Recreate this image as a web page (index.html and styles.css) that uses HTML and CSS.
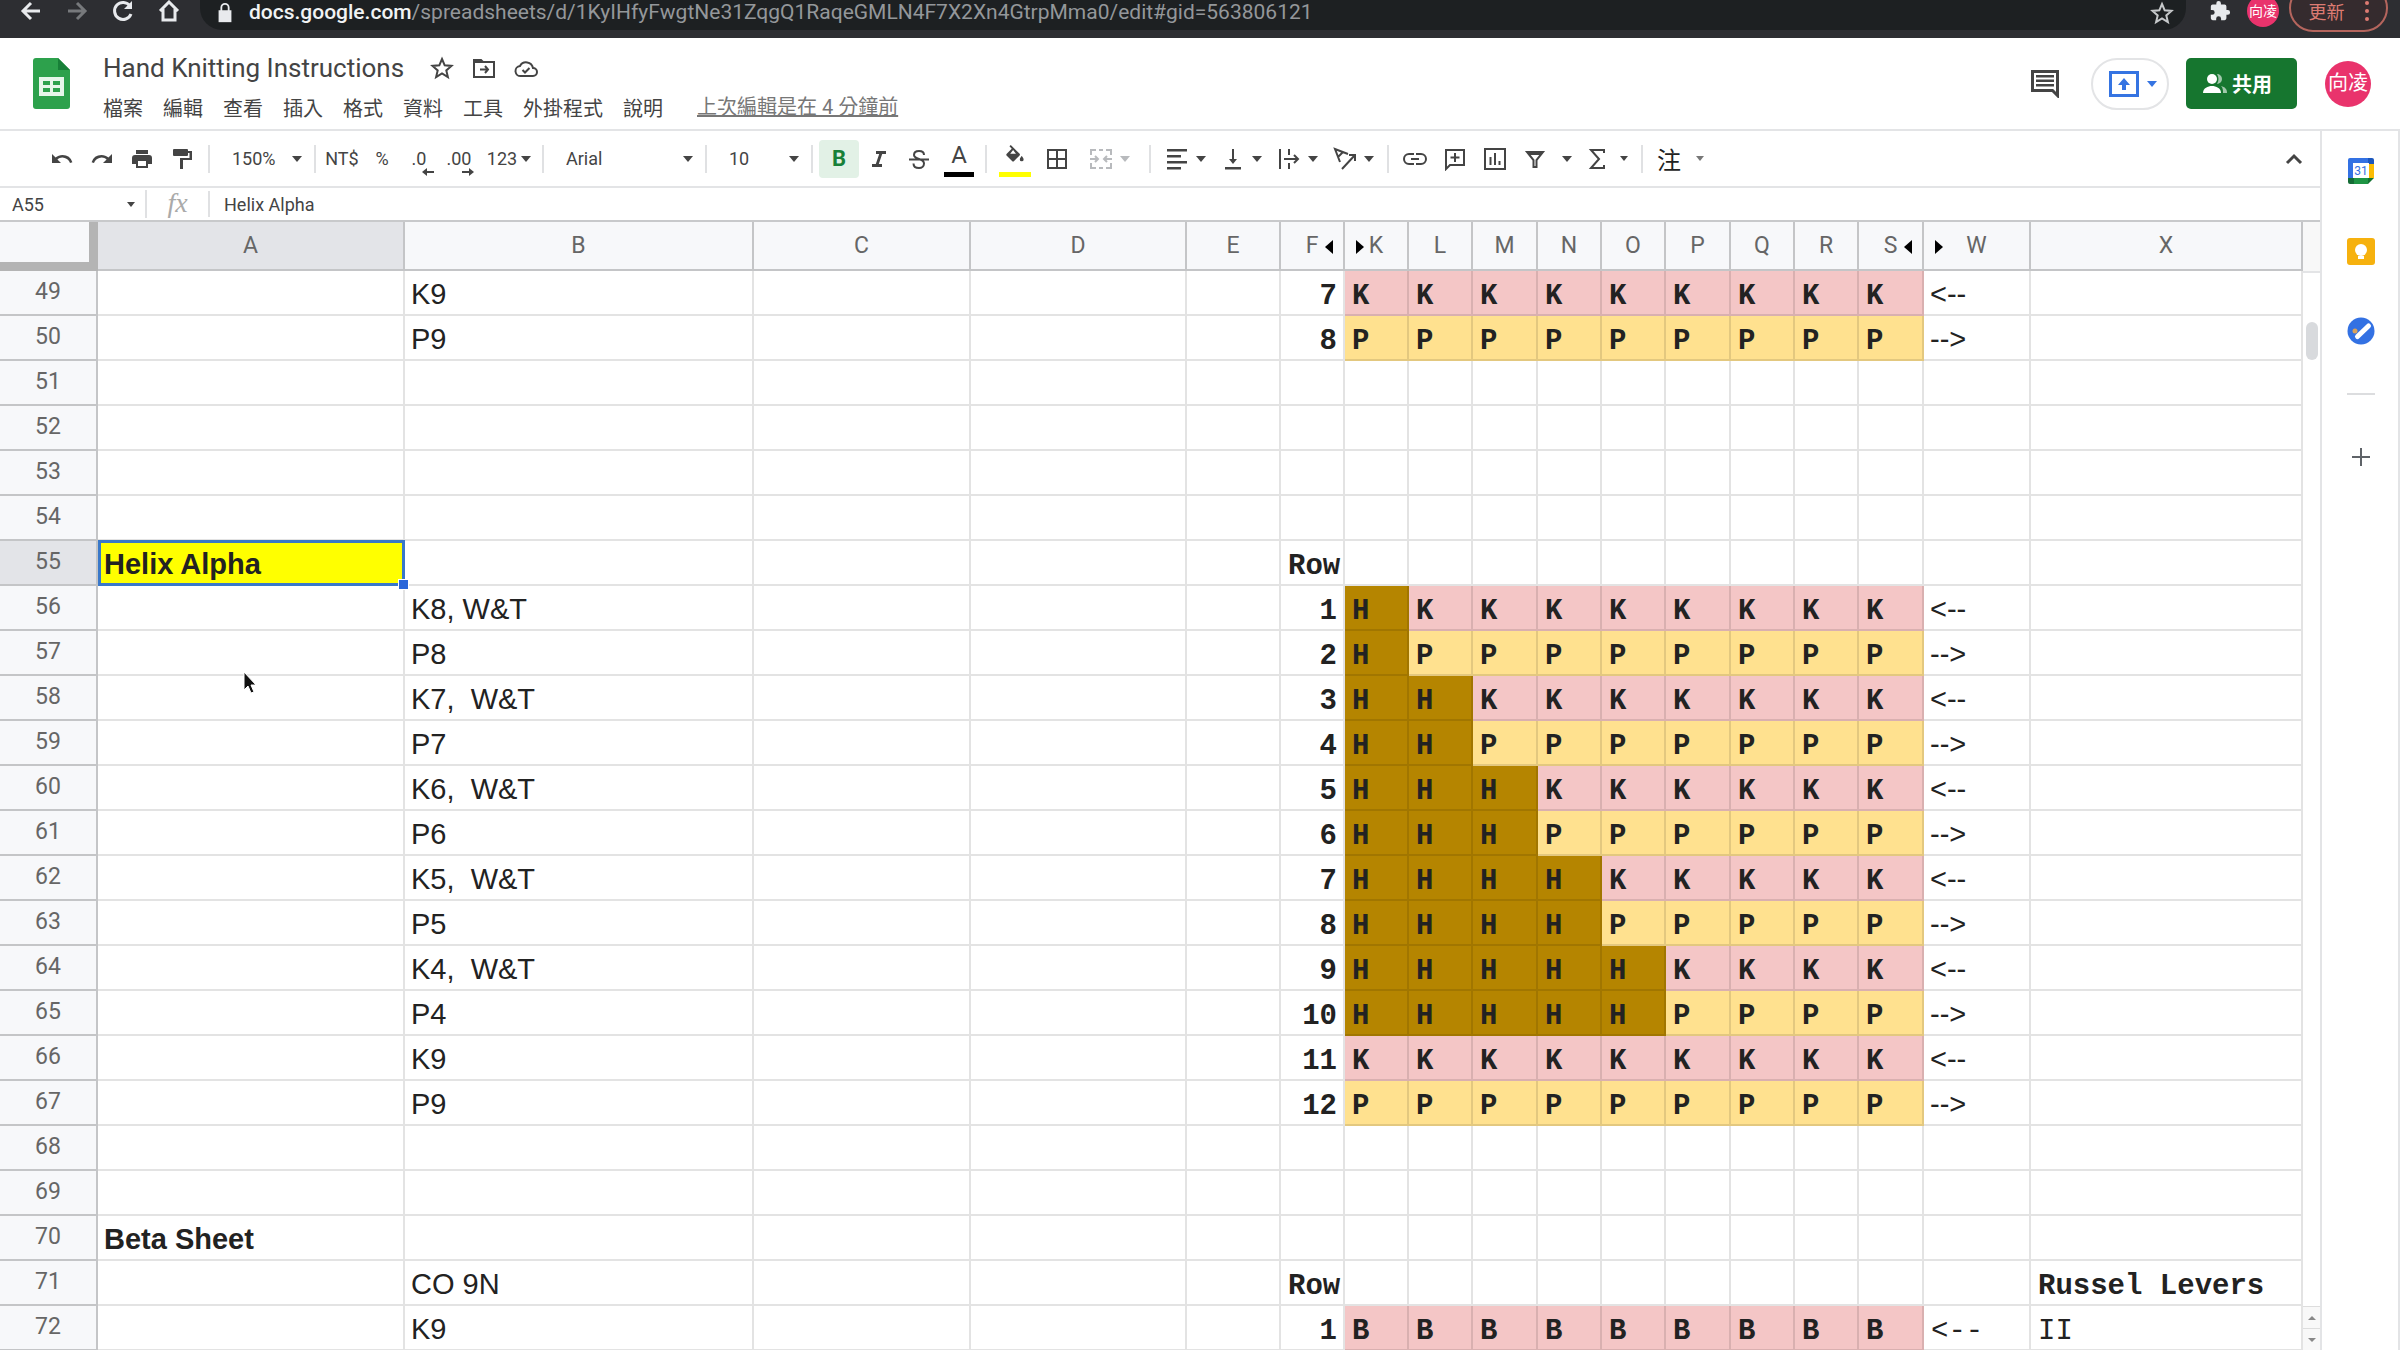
FILE: index.html
```html
<!DOCTYPE html>
<html lang="zh-Hant">
<head>
    <meta charset="UTF-8">
    <meta name="viewport" content="width=device-width, initial-scale=1.0">
    <title>Hand Knitting Instructions</title>
    <link rel="stylesheet" href="styles.css">
</head>
<body>
    <nav class="browser-bar">
        <button class="nav-btn" aria-label="Back"><svg viewBox="0 0 24 24" class="stroke"><path d="M21 12H4M12 4l-8 8 8 8"/></svg></button>
        <button class="nav-btn dim" aria-label="Forward"><svg viewBox="0 0 24 24" class="stroke"><path d="M3 12h17M12 4l8 8-8 8"/></svg></button>
        <button class="nav-btn" aria-label="Reload"><svg viewBox="0 0 24 24" class="stroke"><path d="M20 15a8.500 8.500 0 1 1-1-8"/><path d="M21 2v8h-8z" fill="currentColor" stroke="none"/></svg></button>
        <button class="nav-btn" aria-label="Home"><svg viewBox="0 0 24 24" class="stroke"><path d="M3 12l9-9 9 9M6 10v11h12V10"/></svg></button>
        <div class="address">
            <svg class="lock" viewBox="0 0 16 24"><path d="M1 9h14v13H1z"/><path d="M4 10V6a4 4 0 0 1 8 0v4" fill="none" stroke="currentColor" stroke-width="2"/></svg>
            <span class="url"><b>docs.google.com</b>/spreadsheets/d/1KyIHfyFwgtNe31ZqgQ1RaqeGMLN4F7X2Xn4GtrpMma0/edit#gid=563806121</span>
            <svg class="bookmark stroke" viewBox="0 0 24 24"><path d="M12 3l2.700 6.300 6.800.600-5.200 4.500 1.600 6.700L12 17.500l-5.900 3.600 1.600-6.700L2.500 9.900l6.800-.600z"/></svg>
        </div>
        <svg class="puzzle" viewBox="0 0 24 24"><path d="M20.500 11H19V7a2 2 0 0 0-2-2h-4V3.500a2.500 2.500 0 0 0-5 0V5H4a2 2 0 0 0-2 2v3.800h1.500a2.700 2.700 0 0 1 0 5.400H2V20a2 2 0 0 0 2 2h3.800v-1.500a2.700 2.700 0 0 1 5.400 0V22H17a2 2 0 0 0 2-2v-4h1.500a2.500 2.500 0 0 0 0-5z"/></svg>
        <span class="avatar small">向凌</span>
        <button class="update">更新 <i></i></button>
    </nav>

    <header class="doc-header">
        <svg class="logo" viewBox="0 0 37 51">
            <path d="M3 0h22l12 12v36a3 3 0 0 1-3 3H3a3 3 0 0 1-3-3V3a3 3 0 0 1 3-3z" fill="#2da14c"/>
            <path d="M25 0l12 12H25z" fill="#188038"/>
            <path d="M6 19h25v19H6z" fill="#e6f6ea"/>
            <path d="M10 23h7v4h-7zm10 0h7v4h-7zM10 30h7v4h-7zm10 0h7v4h-7z" fill="#2da14c"/>
        </svg>
        <div class="doc-info">
            <div class="title-row">
                <h1>Hand Knitting Instructions</h1>
                <button aria-label="Star"><svg viewBox="0 0 24 24" class="stroke"><path d="M12 3l2.700 6.300 6.800.600-5.200 4.500 1.600 6.700L12 17.500l-5.900 3.600 1.600-6.700L2.500 9.900l6.800-.600z"/></svg></button>
                <button aria-label="Move"><svg viewBox="0 0 24 24" class="stroke"><path d="M2 4h7l2 2h11v15H2zM2 6h9M8 13.500h8M13 10l3 3.500-3 3.500"/></svg></button>
                <button aria-label="Saved"><svg viewBox="0 0 24 24" class="stroke"><path d="M7 20a5 5 0 0 1-1-10 7 7 0 0 1 13 2 4 4 0 0 1 0 8zM8.500 14l2.500 2.500 4.500-4.500"/></svg></button>
            </div>
            <div class="menu-row">
                <button>檔案</button>
                <button>編輯</button>
                <button>查看</button>
                <button>插入</button>
                <button>格式</button>
                <button>資料</button>
                <button>工具</button>
                <button>外掛程式</button>
                <button>說明</button>
                <a class="last-edit" href="#">上次編輯是在 4 分鐘前</a>
            </div>
        </div>
        <button class="comments" aria-label="Comments"><svg viewBox="0 0 28 28"><path d="M1.500 1.500h25v24l-5-5h-20z" fill="none" stroke="currentColor" stroke-width="3"/><path d="M5 5h18v2.500H5zm0 4.500h18V12H5zM5 14h18v2.500H5z"/></svg></button>
        <button class="present" aria-label="Present">
            <svg viewBox="0 0 30 26"><path d="M1.500 1.500h27v23h-27z" fill="none" stroke="currentColor" stroke-width="3"/><path d="M15 7l6 7h-4v5h-4v-5H9z"/></svg>
            <i class="caret"></i>
        </button>
        <button class="share">
            <svg viewBox="0 0 24 24"><circle cx="9" cy="7" r="5"/><path d="M0 21c0-5 5-7 9-7s9 2 9 7z"/><path d="M14 2a5 5 0 0 1 0 10c2-3 2-7 0-10zM18 14c4 1 6 3 6 7h-4c0-3 0-5-2-7z" opacity=".6"/></svg>
            共用
        </button>
        <span class="avatar">向凌</span>
    </header>

    <div class="workspace">
        <main class="editor">
            <div class="toolbar">
                <div class="group">
                    <button class="tool" aria-label="Undo"><svg viewBox="0 0 24 24"><path d="M12.500 8c-2.700 0-5 1-6.900 2.600L2 7v9h9l-3.600-3.600A8 8 0 0 1 20 16l2.400-.800A10.500 10.500 0 0 0 12.500 8z"/></svg></button>
                    <button class="tool" aria-label="Redo"><svg viewBox="0 0 24 24"><path d="M11.500 8c2.700 0 5 1 6.900 2.600L22 7v9h-9l3.600-3.600A8 8 0 0 0 4 16l-2.400-.800A10.500 10.500 0 0 1 11.500 8z"/></svg></button>
                    <button class="tool" aria-label="Print"><svg viewBox="0 0 24 24"><path d="M19 8H5a3 3 0 0 0-3 3v6h4v4h12v-4h4v-6a3 3 0 0 0-3-3zm-3 11H8v-5h8zm2-16H6v4h12z"/></svg></button>
                    <button class="tool" aria-label="Paint format"><svg viewBox="0 0 24 24"><path d="M18 4V3a1 1 0 0 0-1-1H4a1 1 0 0 0-1 1v5a1 1 0 0 0 1 1h13a1 1 0 0 0 1-1V6h1.500v5H10v11h3v-9h9V4z"/></svg></button>
                </div>
                <div class="group">
                    <label class="pick zoom"><select aria-label="Zoom"><option>150%</option></select></label>
                </div>
                <div class="group">
                    <button class="tool">NT$</button>
                    <button class="tool">%</button>
                    <button class="tool decimal">.0<svg viewBox="0 0 12 8"><path d="M5 0v3h7v2H5v3L0 4z"/></svg></button>
                    <button class="tool decimal">.00<svg viewBox="0 0 12 8"><path d="M7 0v3H0v2h7v3l5-4z"/></svg></button>
                    <button class="tool format">123<i class="caret"></i></button>
                </div>
                <div class="group">
                    <label class="pick font"><select aria-label="Font"><option>Arial</option></select></label>
                </div>
                <div class="group">
                    <label class="pick size"><select aria-label="Font size"><option>10</option></select></label>
                </div>
                <div class="group">
                    <button class="tool bold active">B</button>
                    <button class="tool" aria-label="Italic"><svg viewBox="0 0 24 24"><path d="M9 4v3h3.200L8.800 17H5v3h10v-3h-3.200l3.400-10H19V4z"/></svg></button>
                    <button class="tool strike" aria-label="Strikethrough"><svg viewBox="0 0 24 24" class="stroke"><path d="M17 8c0-3-2-4-5-4S7 5.500 7 8c0 2 2 3 5 4s5 2 5 4.500S15 21 12 21s-5.500-1.500-5.500-4.500M2 12.500h20"/></svg></button>
                    <button class="tool text-color"><span>A</span></button>
                </div>
                <div class="group">
                    <button class="tool fill-color" aria-label="Fill color"><svg viewBox="0 0 24 24"><path d="M16.600 8.900L7.600 0 6.200 1.400l2.400 2.400-5.200 5.200a1.500 1.500 0 0 0 0 2.100l5.500 5.500a1.500 1.500 0 0 0 2.200 0l5.500-5.500a1.500 1.500 0 0 0 0-2.200zM7 9L10 5.200 13 9zM19 11.500s-2 2.200-2 3.500a2 2 0 0 0 4 0c0-1.300-2-3.500-2-3.500z"/></svg></button>
                    <button class="tool" aria-label="Borders"><svg viewBox="0 0 24 24" class="stroke"><path d="M3 3h18v18H3zM12 3v18M3 12h18"/></svg></button>
                    <button class="tool split merge disabled" aria-label="Merge cells"><svg viewBox="0 0 24 24" class="stroke"><path d="M2 8V3h5M10 3h4M17 3h5v5M2 16v5h5M10 21h4M17 21h5v-5M1 12h8M23 12h-8M6 9l3 3-3 3M18 9l-3 3 3 3"/></svg><i class="caret"></i></button>
                </div>
                <div class="group">
                    <button class="tool split" aria-label="Horizontal align"><svg viewBox="0 0 24 24"><path d="M2 2h20v2.500H2zm0 6h14v2.500H2zm0 6h20v2.500H2zm0 6h14v2.500H2z"/></svg><i class="caret"></i></button>
                    <button class="tool split" aria-label="Vertical align"><svg viewBox="0 0 24 24"><path d="M16 12h-3V2h-2v10H8l4 5zM4 20h16v2.500H4z"/></svg><i class="caret"></i></button>
                    <button class="tool split" aria-label="Text wrapping"><svg viewBox="0 0 24 24" class="stroke"><path d="M3 2v20M12 2v6M12 16v6M7 12h14M17 8l4 4-4 4"/></svg><i class="caret"></i></button>
                    <button class="tool split" aria-label="Text rotation"><svg viewBox="0 0 24 24" class="stroke"><path d="M7 15L2 2l13 5M5 10l5-5M9 22L22 8M16 8h6v6"/></svg><i class="caret"></i></button>
                </div>
                <div class="group">
                    <button class="tool" aria-label="Insert link"><svg viewBox="0 0 24 24" class="stroke"><path d="M11 7H6a5 5 0 0 0 0 10h5M13 7h5a5 5 0 0 1 0 10h-5M8 12h8"/></svg></button>
                    <button class="tool" aria-label="Insert comment"><svg viewBox="0 0 24 24" class="stroke"><path d="M3 22V3h18v15H7zM12 6v9M7.500 10.500h9"/></svg></button>
                    <button class="tool" aria-label="Insert chart"><svg viewBox="0 0 24 24" class="stroke"><path d="M2 2h20v20H2zM7.500 10v8M12 6v12M16.500 14v4"/></svg></button>
                    <button class="tool split wide" aria-label="Filter"><svg viewBox="0 0 24 24" class="stroke"><path d="M4 5h16l-6.500 8v7h-3v-7zM6 7h12"/></svg><i class="caret"></i></button>
                    <button class="tool split functions" aria-label="Functions"><svg viewBox="0 0 24 24" class="stroke"><path d="M19 6V3H6l8 9-8 9h13v-3"/></svg><i class="caret tiny"></i></button>
                </div>
                <div class="group">
                    <button class="tool split wide ime">注<i class="caret tiny"></i></button>
                </div>
                <button class="tool collapse" aria-label="Hide menus"><svg viewBox="0 0 24 24" class="stroke"><path d="M5 16l7-7 7 7"/></svg></button>
            </div>

            <div class="formula-bar">
                <label class="name-box"><input type="text" value="A55" aria-label="Cell name"><i class="caret tiny"></i></label>
                <span class="fx">fx</span>
                <input class="formula" type="text" value="Helix Alpha" aria-label="Formula">
            </div>

            <div class="sheet">
                <table class="grid">
                    <colgroup>
                        <col class="w-head"><col class="w-a"><col class="w-b"><col class="w-c"><col class="w-d"><col class="w-e"><col class="w-f">
                        <col class="w-st"><col class="w-st"><col class="w-st wide"><col class="w-st"><col class="w-st"><col class="w-st wide"><col class="w-st"><col class="w-st"><col class="w-st wide">
                        <col class="w-w"><col>
                    </colgroup>
                    <thead>
                        <tr>
                            <td class="corner"></td>
                            <th class="current">A</th>
                            <th>B</th>
                            <th>C</th>
                            <th>D</th>
                            <th>E</th>
                            <th class="hides-next">F</th>
                            <th class="hides-prev">K</th>
                            <th>L</th>
                            <th>M</th>
                            <th>N</th>
                            <th>O</th>
                            <th>P</th>
                            <th>Q</th>
                            <th>R</th>
                            <th class="hides-next">S</th>
                            <th class="hides-prev">W</th>
                            <th>X</th>
                        </tr>
                    </thead>
                    <tbody id="rows"></tbody>
                </table>
                <div class="scrollbar">
                    <div class="track"><div class="thumb"></div></div>
                    <button class="up" aria-label="Scroll up"></button>
                    <button class="down" aria-label="Scroll down"></button>
                </div>
                <svg class="pointer" viewBox="0 0 14 24"><path d="M1 1v18l4-4 3 7 3-1-3-7h5z" fill="#111" stroke="#fff" stroke-width="1"/></svg>
            </div>
        </main>

        <aside class="side-panel">
            <button aria-label="Calendar"><svg viewBox="0 0 28 28"><path d="M1 3a2 2 0 0 1 2-2h18v6H7v14H1z" fill="#3371e3"/><path d="M21 1h4a2 2 0 0 1 2 2v4h-6z" fill="#1c57bd"/><path d="M21 7h6v14h-6z" fill="#fbbc04"/><path d="M7 21h14v6H7z" fill="#1e9444"/><path d="M1 21h6v6H3a2 2 0 0 1-2-2z" fill="#146c35"/><path d="M21 21h6l-6 6z" fill="#137333"/><path d="M6 6h16v15H6z" fill="#fff"/><text x="14" y="18" text-anchor="middle">31</text></svg></button>
            <button aria-label="Keep"><svg viewBox="0 0 28 28"><rect x="0" y="1" width="28" height="27" rx="3" fill="#f6b10e"/><circle cx="14" cy="13" r="6" fill="#fff"/><path d="M11 19h6v3h-6z" fill="#fff"/></svg></button>
            <button aria-label="Tasks"><svg viewBox="0 0 28 28"><circle cx="14" cy="14" r="13.500" fill="#3371e3"/><circle cx="8" cy="14" r="2.500" fill="#d9a25b"/><path d="M10.500 19.500L21.500 9" stroke="#fff" stroke-width="5" stroke-linecap="round"/></svg></button>
            <hr>
            <button aria-label="Add-ons"><svg viewBox="0 0 28 28"><path d="M14 5v18M5 14h18" stroke="#5f6368" stroke-width="2"/></svg></button>
        </aside>
    </div>

    <script src="script.js"></script>
</body>
</html>
```
FILE: styles.css
```css
* {
    box-sizing: border-box;
    margin: 0;
    padding: 0;
}

body {
    height: 100vh;
    display: flex;
    flex-direction: column;
    overflow: hidden;
    background: #fff;
    color: #444;
    font-family: Roboto, "Noto Sans CJK TC", sans-serif;
    font-size: 18px;
}

button, input, select {
    border: none;
    background: none;
    color: inherit;
    font: inherit;
    outline: none;
}

button {
    display: flex;
    align-items: center;
    justify-content: center;
    white-space: nowrap;
}

svg {
    display: block;
    flex: none;
    width: 24px;
    height: 24px;
    fill: currentColor;
}

.stroke {
    fill: none;
    stroke: currentColor;
    stroke-width: 2;
}

.caret {
    flex: none;
    border: 5px solid transparent;
    border-top: 6px solid currentColor;
    border-bottom: none;
}

.caret.tiny {
    border-width: 5px 4px 0;
}

/* browser bar */
.browser-bar {
    flex: none;
    display: flex;
    align-items: flex-start;
    height: 38px;
    padding: 0 12px 0 8px;
    background: #2d2e32;
    color: #e8eaed;
    overflow: hidden;
}

.nav-btn {
    width: 46px;
    height: 22px;
}

.nav-btn.dim {
    color: #77797c;
}

.nav-btn .stroke {
    stroke-width: 3;
}

.address {
    flex: 1;
    display: flex;
    align-items: center;
    height: 30px;
    margin-left: 8px;
    padding: 0 12px 5px 17px;
    background: #1d2022;
    border-radius: 0 0 22px 22px;
}

.lock {
    width: 16px;
    height: 22px;
    margin-right: 16px;
}

.url {
    flex: 1;
    color: #94979a;
    font-size: 21px;
    line-height: 25px;
}

.url b {
    color: #f1f3f4;
    font-weight: 500;
}

.bookmark {
    color: #c6c8ca;
}

.puzzle {
    height: 22px;
    margin: 0 15px 0 22px;
}

.avatar {
    flex: none;
    width: 46px;
    height: 46px;
    border-radius: 50%;
    background: #e9336c;
    color: #fff;
    font-size: 20px;
    line-height: 44px;
    text-align: center;
}

.avatar.small {
    width: 32px;
    height: 32px;
    margin-top: -5px;
    font-size: 14px;
    line-height: 32px;
}

.update {
    gap: 20px;
    width: 99px;
    height: 48px;
    margin: -16px 0 0 10px;
    padding: 6px 0 0;
    border: 2px solid #b5655d;
    border-radius: 24px;
    background: #352b2e;
    color: #dd7b72;
}

.update i {
    width: 4px;
    height: 4px;
    border-radius: 50%;
    background: currentColor;
    box-shadow: 0 -8px currentColor, 0 8px currentColor;
}

/* document header */
.doc-header {
    flex: none;
    display: flex;
    align-items: center;
    height: 93px;
    padding: 0 29px 0 33px;
    border-bottom: 2px solid #e3e4e6;
}

.logo {
    width: 37px;
    height: 51px;
    margin-right: 33px;
}

.doc-info {
    flex: 1;
    padding-top: 8px;
}

.title-row {
    display: flex;
    align-items: center;
    gap: 18px;
    margin-bottom: 10px;
}

.title-row h1 {
    margin-right: 8px;
    font-size: 26px;
    font-weight: 400;
    line-height: 32px;
}

.menu-row {
    display: flex;
    align-items: center;
    gap: 20px;
    font-size: 20px;
    line-height: 30px;
}

.last-edit {
    margin: 0 0 4px 14px;
    color: #777;
    line-height: 24px;
}

.comments svg {
    width: 28px;
    height: 28px;
}

.present {
    gap: 8px;
    width: 78px;
    height: 52px;
    margin: 0 17px 0 32px;
    padding-left: 6px;
    border: 2px solid #e3e4e6;
    border-radius: 26px;
    color: #3574e2;
}

.present svg {
    width: 30px;
    height: 26px;
}

.share {
    gap: 5px;
    width: 111px;
    height: 51px;
    margin-right: 28px;
    padding-right: 8px;
    border-radius: 5px;
    background: #16762f;
    color: #fff;
    font-size: 20px;
    font-weight: 700;
}

/* editor */
.workspace {
    flex: 1;
    display: flex;
    min-height: 0;
}

.editor {
    flex: 1;
    display: flex;
    flex-direction: column;
    min-width: 0;
}

.toolbar {
    flex: none;
    display: flex;
    align-items: center;
    height: 57px;
    padding: 0 6px 0 42px;
    border-bottom: 2px solid #e3e4e6;
}

.group {
    display: flex;
    align-items: center;
}

.group + .group::before {
    content: '';
    width: 2px;
    height: 28px;
    margin: 0 6px;
    background: #e0e1e3;
}

.tool {
    position: relative;
    width: 40px;
    height: 38px;
    border-radius: 4px;
}

.pick {
    display: flex;
    align-items: center;
    width: 92px;
    padding: 0 6px 0 16px;
}

.pick.font {
    width: 149px;
}

.pick select {
    flex: 1;
    min-width: 0;
    appearance: none;
}

.pick::after {
    content: '';
    border: 5px solid transparent;
    border-top: 6px solid currentColor;
    border-bottom: none;
}

.tool.decimal {
    padding-right: 6px;
}

.tool.decimal svg {
    position: absolute;
    right: 8px;
    bottom: 2px;
    width: 12px;
    height: 8px;
}

.tool.format {
    gap: 4px;
    width: 54px;
}

.tool.active {
    background: #e2f1e6;
    color: #188038;
}

.tool.bold {
    font-size: 22px;
    font-weight: 700;
}

.text-color span {
    height: 36px;
    padding: 0 7px;
    border-bottom: 5px solid #000;
    font-size: 24px;
    line-height: 28px;
}

.tool.fill-color {
    width: 44px;
}

.fill-color svg {
    height: 36px;
    width: 32px;
    padding: 4px 4px 4px;
    border-bottom: 5px solid #ff0;
}

.tool.split {
    justify-content: flex-start;
    gap: 7px;
    width: 56px;
    padding-left: 8px;
}

.tool.split.wide {
    gap: 15px;
    width: 62px;
}

.tool.split.merge {
    width: 66px;
    padding-left: 12px;
}

.tool.split.functions {
    gap: 11px;
    width: 58px;
}

.tool.disabled {
    color: #b8babd;
}

.tool.ime {
    color: #222;
    font-size: 24px;
}

.ime .caret {
    color: #777;
}

.tool.collapse {
    margin-left: auto;
}

.collapse .stroke {
    stroke-width: 3;
}

.formula-bar {
    flex: none;
    display: flex;
    align-items: center;
    height: 34px;
    border-bottom: 2px solid #c8c9cb;
}

.name-box {
    display: flex;
    align-items: center;
    width: 147px;
    height: 28px;
    padding: 0 10px 0 12px;
    border-right: 2px solid #e0e1e3;
}

.name-box input {
    flex: 1;
    min-width: 0;
}

.fx {
    width: 63px;
    height: 26px;
    border-right: 2px solid #e0e1e3;
    color: #aaa;
    font: italic 28px/24px "Liberation Serif", serif;
    text-align: center;
}

.formula {
    flex: 1;
    padding-left: 14px;
}

/* grid */
.sheet {
    position: relative;
    flex: 1;
    display: flex;
    align-items: flex-start;
    min-height: 0;
}

.grid {
    flex: 1;
    width: 100%;
    border-spacing: 0;
    table-layout: fixed;
    color: #222;
    font-family: "Liberation Sans", Arial, sans-serif;
    font-size: 29px;
}

.w-head { width: 98px; }
.w-a { width: 307px; }
.w-b { width: 349px; }
.w-c { width: 217px; }
.w-d { width: 216px; }
.w-e { width: 94px; }
.w-f { width: 64px; }
.w-st { width: 64px; }
.w-st.wide { width: 65px; }
.w-w { width: 107px; }

.grid th {
    position: relative;
    border: solid #c4c5c7;
    border-width: 0 2px 2px 0;
    background: #f7f8fa;
    color: #666;
    font: 400 23px/26px Roboto, sans-serif;
    text-align: center;
    vertical-align: middle;
}

.grid thead th {
    height: 49px;
}

.grid tbody th {
    height: 45px;
    padding-bottom: 2px;
}

.grid th.current {
    background: #e3e4e8;
}

.corner {
    background: #f7f8fa;
    border: solid #b4b4b4;
    border-width: 0 9px 9px 0;
}

.hides-next::after,
.hides-prev::before {
    content: '';
    position: absolute;
    top: 18px;
    border: 7px solid transparent;
}

.hides-next::after {
    right: 10px;
    border-right: 8px solid #000;
    border-left: none;
}

.hides-prev::before {
    left: 11px;
    border-left: 8px solid #000;
    border-right: none;
}

.grid tbody td {
    position: relative;
    height: 45px;
    padding: 3px 6px 0;
    border: solid rgba(0, 0, 0, .11);
    border-width: 0 2px 2px 0;
    line-height: 36px;
    white-space: pre;
}

.grid .mono {
    padding: 8px 6px 0 7px;
    font-family: "Liberation Mono", "Courier New", monospace;
    line-height: 32px;
}

.grid .bold {
    font-weight: 700;
}

.grid .num {
    text-align: right;
}

.grid .pink { background: #f4c6c6; }
.grid .yellow { background: #ffe18f; }
.grid .brown { background: #b58500; }

.grid td.selected {
    background: #ff0;
}

.selected::before {
    content: '';
    position: absolute;
    inset: -1px -2px -2px 0;
    border: 3px solid #3a78c9;
}

.selected::after {
    content: '';
    position: absolute;
    z-index: 1;
    right: -5px;
    bottom: -5px;
    width: 9px;
    height: 9px;
    background: #2a66d9;
    outline: 1px solid #fff;
}

.scrollbar {
    flex: none;
    align-self: stretch;
    display: flex;
    flex-direction: column;
    width: 17px;
}

.scrollbar::before {
    content: '';
    height: 49px;
    background: #f8f8f8;
    border-bottom: 2px solid #e3e4e6;
}

.track {
    flex: 1;
    padding: 49px 2px 0 3px;
}

.thumb {
    height: 38px;
    border-radius: 6px;
    background: #d8dadd;
}

.scrollbar button {
    height: 22px;
    border-top: 1px solid #ddd;
    background: #f8f8f8;
    color: #888;
}

.up::after,
.down::after {
    content: '';
    border: 4px solid transparent;
}

.up::after {
    border-bottom-color: currentColor;
    border-top: none;
}

.down::after {
    border-top-color: currentColor;
    border-bottom: none;
}

.pointer {
    position: absolute;
    top: 449px;
    left: 243px;
    width: 14px;
}

/* side panel */
.side-panel {
    flex: none;
    display: flex;
    flex-direction: column;
    align-items: center;
    gap: 52px;
    width: 80px;
    padding: 26px 0 0 2px;
    border: solid #e3e4e6;
    border-width: 0 2px;
}

.side-panel svg {
    width: 28px;
    height: 28px;
}

.side-panel text {
    fill: #3371e3;
    font-size: 12px;
}

.side-panel hr {
    width: 28px;
    margin: -4px 0;
    border: none;
    border-top: 2px solid #dcdddf;
}
```
FILE: script.js
```js
const FIRST_ROW = 49;
const LAST_ROW = 72;
const FILLS = { K: 'pink', P: 'yellow', H: 'brown', B: 'pink' };

// row number -> [column B text, counter, stitches K..S, direction]
const rows = {
    49: ['K9', '7', 'KKKKKKKKK', '<--'],
    50: ['P9', '8', 'PPPPPPPPP', '-->'],
    55: ['', 'Row', '', ''],
    56: ['K8, W&T', '1', 'HKKKKKKKK', '<--'],
    57: ['P8', '2', 'HPPPPPPPP', '-->'],
    58: ['K7,  W&T', '3', 'HHKKKKKKK', '<--'],
    59: ['P7', '4', 'HHPPPPPPP', '-->'],
    60: ['K6,  W&T', '5', 'HHHKKKKKK', '<--'],
    61: ['P6', '6', 'HHHPPPPPP', '-->'],
    62: ['K5,  W&T', '7', 'HHHHKKKKK', '<--'],
    63: ['P5', '8', 'HHHHPPPPP', '-->'],
    64: ['K4,  W&T', '9', 'HHHHHKKKK', '<--'],
    65: ['P4', '10', 'HHHHHPPPP', '-->'],
    66: ['K9', '11', 'KKKKKKKKK', '<--'],
    67: ['P9', '12', 'PPPPPPPPP', '-->'],
    71: ['CO 9N', 'Row', '', ''],
    72: ['K9', '1', 'BBBBBBBBB', '<--']
};
const titles = { 55: 'Helix Alpha', 70: 'Beta Sheet' };
const levers = { 71: 'Russel Levers', 72: 'II' };

function addCell(tr, text, className) {
    const td = document.createElement('td');
    td.textContent = text || '';
    if (className) td.className = className;
    tr.appendChild(td);
}

const body = document.getElementById('rows');

for (let n = FIRST_ROW; n <= LAST_ROW; n++) {
    const [note, count, stitches, arrow] = rows[n] || ['', '', '', ''];
    const tr = document.createElement('tr');

    const th = document.createElement('th');
    th.textContent = n;
    if (n === 55) th.className = 'current';
    tr.appendChild(th);

    addCell(tr, titles[n], n === 55 ? 'bold selected' : 'bold');
    addCell(tr, note);
    addCell(tr);
    addCell(tr);
    addCell(tr);
    addCell(tr, count, 'mono bold num');
    for (let i = 0; i < 9; i++) {
        const stitch = stitches[i];
        addCell(tr, stitch, 'mono bold ' + (FILLS[stitch] || ''));
    }
    addCell(tr, arrow, n > 70 ? 'mono' : '');
    addCell(tr, levers[n], n === 71 ? 'mono bold' : 'mono');

    body.appendChild(tr);
}
```
